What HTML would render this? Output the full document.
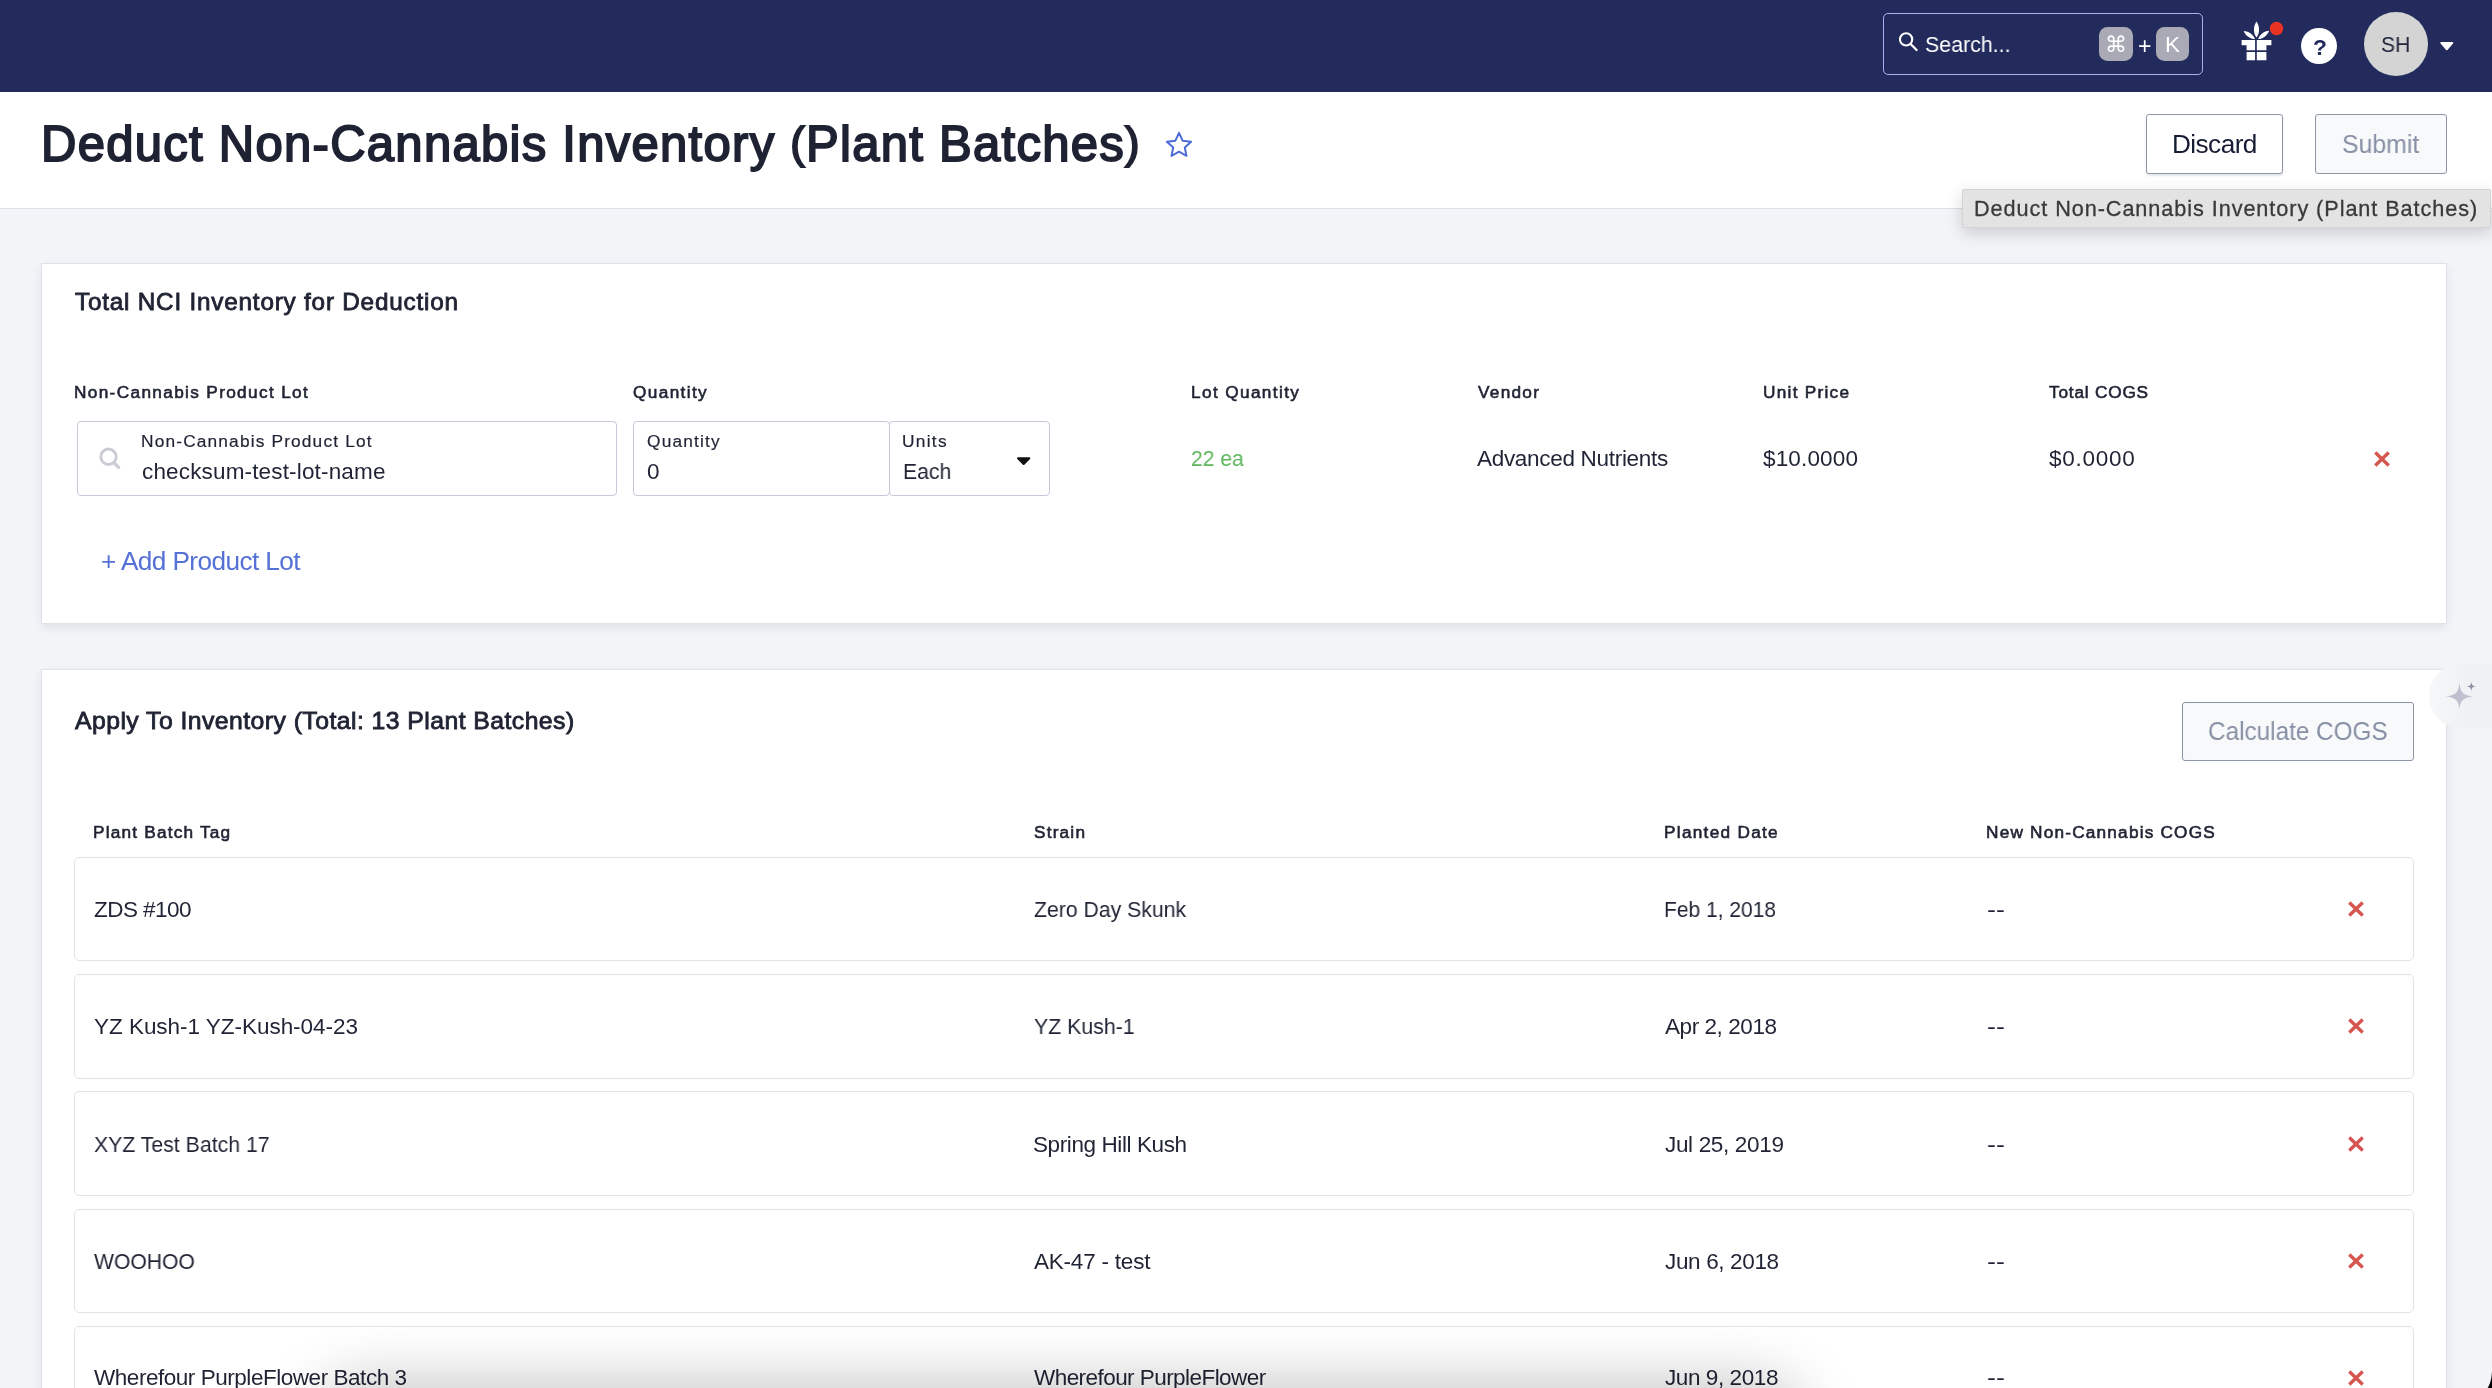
<!DOCTYPE html>
<html lang="en">
<head>
<meta charset="utf-8">
<title>Deduct Non-Cannabis Inventory (Plant Batches)</title>
<style>
html,body{margin:0;padding:0}
body{width:2492px;height:1388px;overflow:hidden;position:relative;background:#f2f4f8;
 font-family:"Liberation Sans","DejaVu Sans",sans-serif;color:#1f2333}
.t{position:absolute;white-space:pre;line-height:1;margin:0;font-weight:400;will-change:transform}
svg{position:absolute;overflow:visible}
button{padding:0;margin:0;font:inherit;color:inherit}
kbd{font-family:inherit}
.t .p{font-size:0.89em;position:relative;top:-3.4px}
.abs{position:absolute;box-sizing:border-box}
.topbar{left:0;top:0;width:2492px;height:91.5px;background:#232a5c}
.searchbox{left:1883px;top:13px;width:320px;height:62px;border:1px solid #a7afee;border-radius:5px}
.key{top:26.8px;width:34px;height:34.4px;border-radius:8.5px;background:#a9aab5}
.pagehead{left:0;top:91.5px;width:2492px;height:117.5px;background:#fff;border-bottom:1px solid #dcdfe6}
.btn{top:114px;height:60px;border:1px solid #8c95a9;border-radius:3px;background:#fff;box-shadow:0 1.5px 2px rgba(40,50,90,.12)}
.btn.dis{background:#f8f9fb;box-shadow:none}
.tooltip{left:1962px;top:189px;width:528.5px;height:39px;background:#e3e3e3;border:1px solid #d4d4d4;border-radius:2px;box-shadow:0 5px 16px rgba(0,0,0,.17)}
.card{left:41px;width:2406px;background:#fff;border:1px solid #dfe2e9;box-shadow:0 4px 9px -1px rgba(30,35,60,.10)}
.field{top:421px;height:75px;border:1px solid #c5cad6;border-radius:4px;background:#fff}
.row{position:absolute;box-sizing:border-box;left:74px;width:2340px;border:1px solid #e0e3ea;border-radius:5px;background:#fff}
.spark{left:2429.2px;top:663.8px;width:80px;height:64.4px;border-radius:32.2px 0 0 32.2px;background:linear-gradient(90deg,#f6f7f8 0%,#f0f1f4 45%,#eff0f3 100%)}
.botshadow{left:335px;top:1400px;width:1450px;height:60px;border-radius:30px;background:#888;box-shadow:0 0 60px 20px rgba(0,0,0,.22)}
</style>
</head>
<body>
<!-- top navigation bar -->
<header>
<div class="abs topbar"></div>
<div class="abs searchbox"></div>
<svg style="left:1896px;top:30px" width="24" height="24" viewBox="1896 30 24 24"><circle cx="1906.1" cy="39.4" r="6.1" fill="none" stroke="#fff" stroke-width="2.1"/><path d="M1910.6 44 L1916.6 50" stroke="#fff" stroke-width="2.3" stroke-linecap="round"/></svg>
<span class="t" style="left:1925.05px;top:34.00px;font-size:22.6px;transform:scaleX(0.946);transform-origin:0 0;color:#fff;">Search...</span>
<div class="abs key" style="left:2099px"></div><kbd class="t" style="left:2104.90px;top:34.00px;font-size:22.0px;color:#fff;">⌘</kbd>
<span class="t" style="left:2137.80px;top:35.20px;font-size:23.0px;color:#fff;">+</span>
<div class="abs key" style="left:2155.6px;width:33.4px"></div><kbd class="t" style="left:2165.40px;top:33.80px;font-size:22.6px;color:#fff;">K</kbd>
<!-- gift / what's new -->
<svg style="left:2236px;top:18px" width="50" height="46" viewBox="2236 18 50 46">
 <g fill="#fff">
  <path d="M2256.50 21.60 C2253.00 26.37 2253.20 33.52 2256.50 37.50 C2259.80 33.52 2260.00 26.37 2256.50 21.60Z"/>
  <path d="M2243.70 31.00 C2245.36 35.78 2250.58 39.18 2254.90 39.10 C2253.62 34.97 2248.76 31.08 2243.70 31.00Z"/>
  <path d="M2269.10 30.80 C2264.07 30.98 2259.35 34.96 2258.20 39.10 C2262.50 39.09 2267.59 35.60 2269.10 30.80Z"/>
  <path d="M2241.6 40.1 H2255.1 V50.3 H2246.6 V45.3 H2241.6Z M2256.8 40.1 H2271.4 V45.3 H2266.4 V50.3 H2256.8Z"/>
  <path d="M2246.6 52 H2255.1 V60.2 H2246.6Z M2256.8 52 H2266.4 V60.2 H2256.8Z"/>
 </g>
 <circle cx="2276.5" cy="28.45" r="6.75" fill="#ea3323"/>
</svg>
<div class="abs" style="left:2301.2px;top:28.3px;width:35.5px;height:35.8px;border-radius:50%;background:#fff"></div><span class="t" style="left:2313.00px;top:35.80px;font-size:22.8px;font-weight:700;color:#232a5c;">?</span>
<div class="abs" style="left:2364px;top:11.8px;width:64px;height:64px;border-radius:50%;background:#d4d4d4"></div><span class="t" style="left:2381.04px;top:33.90px;font-size:22.0px;transform:scaleX(0.956);transform-origin:0 0;color:#21253a;">SH</span>
<svg style="left:2438px;top:40px" width="18" height="12" viewBox="2438 40 18 12"><path d="M2441.2 42.9 H2452.4 L2446.8 49.3Z" fill="#fff" stroke="#fff" stroke-width="1.8" stroke-linejoin="round"/></svg>
</header>

<!-- page header -->
<div class="page-title-bar">
<div class="abs pagehead"></div>
<h1 class="t" style="left:40.62px;top:119.88px;font-size:49.02px;letter-spacing:1.273px;color:#1e2233;-webkit-text-stroke:1.85px currentColor;">Deduct Non-Cannabis Inventory <span class="p">(</span>Plant Batches<span class="p">)</span></h1>
<svg style="left:1164px;top:129px" width="30" height="30" viewBox="1164 129 30 30"><path d="M1179.00 132.90 L1182.59 140.66 L1191.08 141.68 L1184.80 147.49 L1186.46 155.87 L1179.00 151.70 L1171.54 155.87 L1173.20 147.49 L1166.92 141.68 L1175.41 140.66 Z" fill="none" stroke="#4f6cd6" stroke-width="2" stroke-linejoin="round"/></svg>
<button type="button" class="abs btn" style="left:2146px;width:137px"></button><span class="t" style="left:2172.00px;top:131.00px;font-size:26.2px;letter-spacing:-0.567px;color:#161c33;">Discard</span>
<button type="button" disabled class="abs btn dis" style="left:2315px;width:132px"></button><span class="t" style="left:2341.75px;top:131.00px;font-size:26.2px;transform:scaleX(0.948);transform-origin:0 0;color:#8790a4;">Submit</span>
</div>

<main>
<!-- card 1 -->
<section>
<div class="abs card" style="top:263px;height:361px"></div>
<h2 class="t" style="left:74.62px;top:290.18px;font-size:24.27px;letter-spacing:0.798px;-webkit-text-stroke:0.85px currentColor;">Total NCI Inventory for Deduction</h2>
<span class="t" style="left:73.70px;top:383.90px;font-size:17.23px;letter-spacing:1.342px;-webkit-text-stroke:0.6px currentColor;">Non-Cannabis Product Lot</span><span class="t" style="left:633.20px;top:383.90px;font-size:17.23px;letter-spacing:1.369px;-webkit-text-stroke:0.6px currentColor;">Quantity</span><span class="t" style="left:1191.20px;top:383.90px;font-size:17.23px;letter-spacing:1.369px;-webkit-text-stroke:0.6px currentColor;">Lot Quantity</span><span class="t" style="left:1477.70px;top:383.90px;font-size:17.23px;letter-spacing:1.272px;-webkit-text-stroke:0.6px currentColor;">Vendor</span><span class="t" style="left:1762.70px;top:383.90px;font-size:17.23px;letter-spacing:1.271px;-webkit-text-stroke:0.6px currentColor;">Unit Price</span><span class="t" style="left:2049.30px;top:383.90px;font-size:17.23px;letter-spacing:0.803px;-webkit-text-stroke:0.6px currentColor;">Total COGS</span>
<div class="abs field" style="left:77px;width:540px"></div>
<svg style="left:96px;top:444px" width="28" height="28" viewBox="96 444 28 28"><circle cx="108.5" cy="456.8" r="7.7" fill="none" stroke="#cacdd5" stroke-width="3"/><path d="M114 462.6 L118.6 467.4" stroke="#cacdd5" stroke-width="3.3" stroke-linecap="round"/></svg>
<label class="t" style="left:141.20px;top:433.10px;font-size:17.31px;letter-spacing:1.159px;-webkit-text-stroke:0.2px currentColor;">Non-Cannabis Product Lot</label><span class="t" style="left:142.10px;top:460.80px;font-size:22.5px;letter-spacing:0.159px;">checksum-test-lot-name</span>
<div class="abs field" style="left:633px;width:257px"></div>
<div class="abs field" style="left:889px;width:161px;background:transparent"></div>
<label class="t" style="left:646.50px;top:433.10px;font-size:17.31px;letter-spacing:1.190px;-webkit-text-stroke:0.2px currentColor;">Quantity</label><span class="t" style="left:647.00px;top:460.80px;font-size:22.5px;">0</span><label class="t" style="left:902.20px;top:433.10px;font-size:17.31px;letter-spacing:1.285px;-webkit-text-stroke:0.2px currentColor;">Units</label><span class="t" style="left:902.76px;top:460.80px;font-size:22.5px;transform:scaleX(0.942);transform-origin:0 0;">Each</span>
<svg style="left:1014px;top:455px" width="20" height="12" viewBox="1014 455 20 12"><path d="M1018 458.2 H1029.3 L1023.65 464Z" fill="#111" stroke="#111" stroke-width="2" stroke-linejoin="round"/></svg>
<span class="t" style="left:1190.96px;top:448.00px;font-size:22.5px;transform:scaleX(0.937);transform-origin:0 0;color:#5cb55a;">22 ea</span><span class="t" style="left:1477.40px;top:448.00px;font-size:22.5px;letter-spacing:-0.301px;">Advanced Nutrients</span><span class="t" style="left:1763.40px;top:448.00px;font-size:22.5px;letter-spacing:0.153px;">$10.0000</span><span class="t" style="left:2049.00px;top:448.00px;font-size:22.5px;letter-spacing:0.730px;">$0.0000</span>
<svg class="x" style="left:2371.80px;top:448.80px" width="20" height="20" viewBox="-10 -10 20 20"><path d="M-6.7 -6.5 L6.7 6.5 M6.7 -6.5 L-6.7 6.5" stroke="#d5554f" stroke-width="3.35" stroke-linecap="butt" fill="none"/></svg>
<a class="t" style="left:100.60px;top:548.20px;font-size:26.2px;letter-spacing:-0.587px;color:#5570d6;">+ Add Product Lot</a>
</section>

<!-- card 2 -->
<section>
<div class="abs card" style="top:669px;height:760px"></div>
<h2 class="t" style="left:74.62px;top:709.38px;font-size:24.77px;letter-spacing:0.446px;-webkit-text-stroke:0.85px currentColor;">Apply To Inventory (Total: 13 Plant Batches)</h2>
<button type="button" disabled class="abs btn dis" style="left:2182px;top:702px;width:232px;height:59px"></button><span class="t" style="left:2208.28px;top:718.00px;font-size:26.5px;transform:scaleX(0.917);transform-origin:0 0;color:#8790a4;">Calculate COGS</span>
<span class="t" style="left:92.90px;top:823.90px;font-size:17.23px;letter-spacing:1.205px;-webkit-text-stroke:0.6px currentColor;">Plant Batch Tag</span><span class="t" style="left:1034.00px;top:823.90px;font-size:17.23px;letter-spacing:1.199px;-webkit-text-stroke:0.6px currentColor;">Strain</span><span class="t" style="left:1664.00px;top:823.90px;font-size:17.23px;letter-spacing:1.284px;-webkit-text-stroke:0.6px currentColor;">Planted Date</span><span class="t" style="left:1986.00px;top:823.90px;font-size:17.23px;letter-spacing:1.200px;-webkit-text-stroke:0.6px currentColor;">New Non-Cannabis COGS</span>
<div role="table">
<div role="row"><div class="row" style="top:857px;height:104px"></div><span class="t" style="left:94.40px;top:898.80px;font-size:22.5px;letter-spacing:-0.556px;">ZDS #100</span><span class="t" style="left:1033.80px;top:898.80px;font-size:22.5px;transform:scaleX(0.943);transform-origin:0 0;">Zero Day Skunk</span><span class="t" style="left:1663.67px;top:898.80px;font-size:22.5px;transform:scaleX(0.933);transform-origin:0 0;">Feb 1, 2018</span><span class="t" style="left:1987.00px;top:898.80px;font-size:22.0px;transform:scaleX(1.215);transform-origin:0 0;">--</span><svg class="x" style="left:2345.90px;top:899.10px" width="20" height="20" viewBox="-10 -10 20 20"><path d="M-6.7 -6.5 L6.7 6.5 M6.7 -6.5 L-6.7 6.5" stroke="#d5554f" stroke-width="3.35" stroke-linecap="butt" fill="none"/></svg></div>
<div role="row"><div class="row" style="top:974px;height:105px"></div><span class="t" style="left:94.40px;top:1015.80px;font-size:22.5px;letter-spacing:-0.032px;">YZ Kush-1 YZ-Kush-04-23</span><span class="t" style="left:1033.80px;top:1015.80px;font-size:22.5px;transform:scaleX(0.947);transform-origin:0 0;">YZ Kush-1</span><span class="t" style="left:1664.60px;top:1015.80px;font-size:22.5px;letter-spacing:-0.432px;">Apr 2, 2018</span><span class="t" style="left:1987.00px;top:1015.80px;font-size:22.0px;transform:scaleX(1.215);transform-origin:0 0;">--</span><svg class="x" style="left:2345.90px;top:1016.10px" width="20" height="20" viewBox="-10 -10 20 20"><path d="M-6.7 -6.5 L6.7 6.5 M6.7 -6.5 L-6.7 6.5" stroke="#d5554f" stroke-width="3.35" stroke-linecap="butt" fill="none"/></svg></div>
<div role="row"><div class="row" style="top:1091px;height:105px"></div><span class="t" style="left:94.40px;top:1133.80px;font-size:22.5px;transform:scaleX(0.944);transform-origin:0 0;">XYZ Test Batch 17</span><span class="t" style="left:1032.80px;top:1133.80px;font-size:22.5px;letter-spacing:-0.404px;">Spring Hill Kush</span><span class="t" style="left:1664.60px;top:1133.80px;font-size:22.5px;letter-spacing:-0.335px;">Jul 25, 2019</span><span class="t" style="left:1987.00px;top:1133.80px;font-size:22.0px;transform:scaleX(1.215);transform-origin:0 0;">--</span><svg class="x" style="left:2345.90px;top:1134.10px" width="20" height="20" viewBox="-10 -10 20 20"><path d="M-6.7 -6.5 L6.7 6.5 M6.7 -6.5 L-6.7 6.5" stroke="#d5554f" stroke-width="3.35" stroke-linecap="butt" fill="none"/></svg></div>
<div role="row"><div class="row" style="top:1209px;height:104px"></div><span class="t" style="left:94.40px;top:1251.00px;font-size:22.5px;transform:scaleX(0.938);transform-origin:0 0;">WOOHOO</span><span class="t" style="left:1033.80px;top:1251.00px;font-size:22.5px;letter-spacing:-0.213px;">AK-47 - test</span><span class="t" style="left:1664.60px;top:1251.00px;font-size:22.5px;letter-spacing:-0.348px;">Jun 6, 2018</span><span class="t" style="left:1987.00px;top:1251.00px;font-size:22.0px;transform:scaleX(1.215);transform-origin:0 0;">--</span><svg class="x" style="left:2345.90px;top:1251.30px" width="20" height="20" viewBox="-10 -10 20 20"><path d="M-6.7 -6.5 L6.7 6.5 M6.7 -6.5 L-6.7 6.5" stroke="#d5554f" stroke-width="3.35" stroke-linecap="butt" fill="none"/></svg></div>
<div role="row"><div class="row" style="top:1326px;height:105px"></div><span class="t" style="left:94.40px;top:1367.20px;font-size:22.5px;letter-spacing:-0.461px;">Wherefour PurpleFlower Batch 3</span><span class="t" style="left:1033.80px;top:1367.20px;font-size:22.5px;letter-spacing:-0.555px;">Wherefour PurpleFlower</span><span class="t" style="left:1664.60px;top:1367.20px;font-size:22.5px;letter-spacing:-0.418px;">Jun 9, 2018</span><span class="t" style="left:1987.00px;top:1367.20px;font-size:22.0px;transform:scaleX(1.215);transform-origin:0 0;">--</span><svg class="x" style="left:2345.90px;top:1367.50px" width="20" height="20" viewBox="-10 -10 20 20"><path d="M-6.7 -6.5 L6.7 6.5 M6.7 -6.5 L-6.7 6.5" stroke="#d5554f" stroke-width="3.35" stroke-linecap="butt" fill="none"/></svg></div>
</div>
</section>
</main>
<!-- AI sparkle tab -->
<div class="abs spark"></div>
<svg style="left:2444px;top:678px" width="36" height="36" viewBox="2444 678 36 36">
 <path d="M2459.4 681.9 C2460 691.5 2462.5 695.3 2472.9 696.4 C2462.5 697.4 2460 701.2 2459.4 709.7 C2458.8 701.2 2456.3 697.4 2445.9 696.4 C2456.3 695.3 2458.8 691.5 2459.4 681.9Z" fill="#bfc0cf"/>
 <path d="M2471.3 681.3 C2471.5 684.9 2472.4 686 2475.9 686.4 C2472.4 686.8 2471.5 687.9 2471.3 691.7 C2471.1 687.9 2470.2 686.8 2466.7 686.4 C2470.2 686 2471.1 684.9 2471.3 681.3Z" fill="#8f90a6"/>
</svg>
<!-- tooltip -->
<div role="tooltip"><div class="abs tooltip"></div><span class="t" style="left:1973.85px;top:198.25px;font-size:21.67px;letter-spacing:0.931px;color:#3a3a3a;-webkit-text-stroke:0.3px currentColor;">Deduct Non-Cannabis Inventory (Plant Batches)</span></div>
<!-- bottom overlay shadow + window corner -->
<div class="abs botshadow"></div>
<svg style="left:2480px;top:1368px" width="12" height="20" viewBox="2480 1368 12 20"><path d="M2492 1371 C2491.6 1379 2490.2 1384 2487.6 1388 H2492Z" fill="#000"/></svg>
</body>
</html>
